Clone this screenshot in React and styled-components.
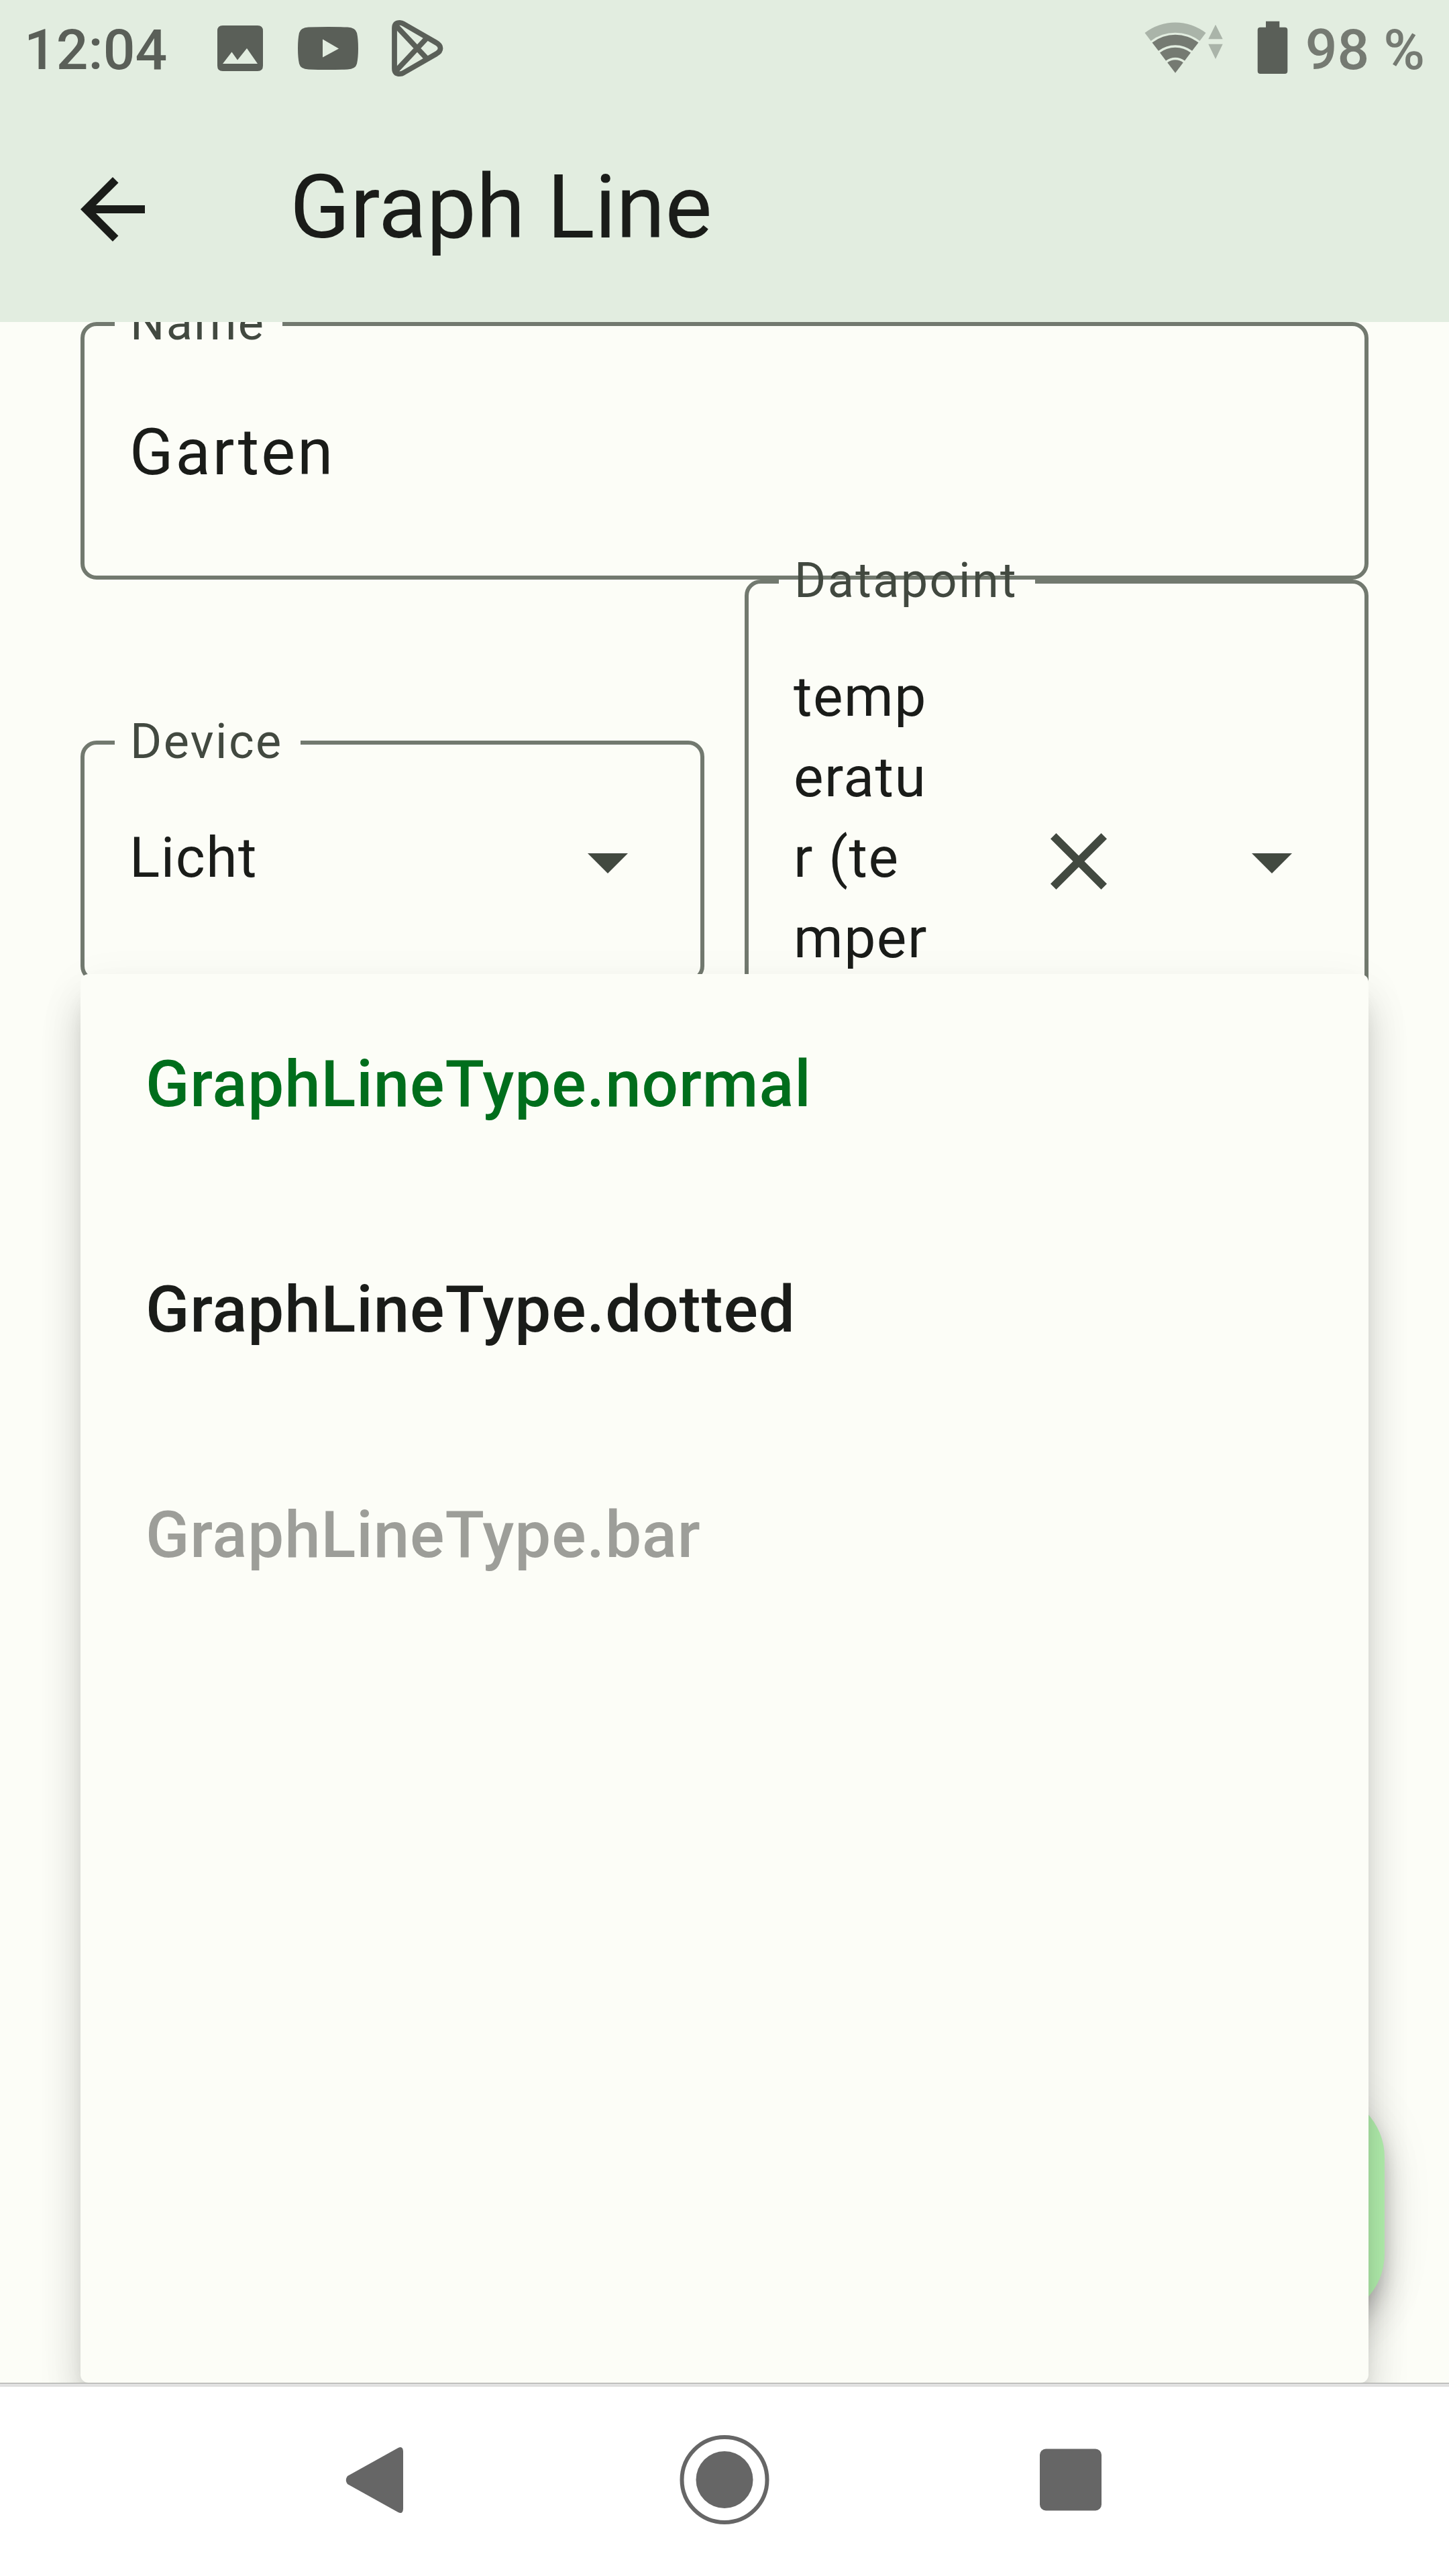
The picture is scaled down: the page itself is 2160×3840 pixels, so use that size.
import React from "react";
import styled, { createGlobalStyle } from "styled-components";

const c = {
  bar: "#e2ede0",
  surface: "#fcfdf7",
  text: "#1a1c19",
  variant: "#424940",
  outline: "#72796f",
  primary: "#006e1c",
  disabled: "#9d9e99",
  fab: "#b3f0ae",
  status: "#5a5f58",
  statusSoft: "#757a72",
  statusFaint: "#aab4a9",
  nav: "#666666",
};

const GlobalStyle = createGlobalStyle`
  html, body { margin: 0; padding: 0; background: ${c.surface}; }
  * { box-sizing: border-box; }
`;

const Screen = styled.div`
  width: 2160px;
  height: 3840px;
  display: flex;
  flex-direction: column;
  overflow: hidden;
  background: ${c.surface};
  font-family: Roboto, "Liberation Sans", sans-serif;
  color: ${c.text};
`;

const StatusBar = styled.header`
  flex: none;
  height: 144px;
  padding: 0 36px 0 36px;
  display: flex;
  justify-content: space-between;
  background: ${c.bar};
`;

const StatusGroup = styled.div`
  display: flex;
  align-items: flex-start;
`;

const StatusText = styled.span`
  font-size: 84px;
  font-weight: 500;
  line-height: 100px;
  padding-top: 25px;
  white-space: pre;
  color: ${(p) => (p.$soft ? c.statusSoft : c.status)};
`;

const StatusIcon = styled.svg`
  display: block;
  flex: none;
  height: 144px;
  width: ${(p) => p.$width}px;
  margin-left: ${(p) => p.$gap || 0}px;
  margin-right: ${(p) => p.$after || 0}px;
`;

const AppBar = styled.div`
  flex: none;
  height: 336px;
  padding-left: 96px;
  display: flex;
  align-items: center;
  gap: 192px;
  background: ${c.bar};
`;

const IconButton = styled.button`
  width: 144px;
  height: 144px;
  padding: 0;
  border: 0;
  background: none;
  flex: none;
  color: ${(p) => p.$color || c.variant};
  margin-left: ${(p) => p.$push || "0"};
  svg {
    display: block;
    width: 144px;
    height: 144px;
    fill: currentColor;
  }
`;

const Title = styled.h1`
  margin: 0;
  padding-bottom: 6px;
  font-size: 132px;
  font-weight: 400;
  line-height: 168px;
`;

const Body = styled.main`
  position: relative;
  flex: none;
  height: 3072px;
  padding: 0 120px;
  overflow: hidden;
`;

const FieldRow = styled.div`
  display: grid;
  grid-template-columns: 1fr 1fr;
  column-gap: 60px;
  align-items: center;
`;

const Field = styled.fieldset`
  display: flex;
  align-items: center;
  min-width: 0;
  margin: 0;
  height: ${(p) => p.$height}px;
  padding: 0 66px 0 45px;
  border: 6px solid ${c.outline};
  border-radius: 24px;
`;

const Label = styled.legend`
  height: 6px;
  padding: 0 26px 0 23px;
  font-size: 72px;
  line-height: 4px;
  letter-spacing: 2.4px;
  white-space: nowrap;
  color: ${c.variant};
`;

const InputValue = styled.div`
  padding: 4px 0 0 22px;
  font-size: 96px;
  line-height: 144px;
  letter-spacing: 3.1px;
`;

const SelectValue = styled.div`
  width: ${(p) => p.$width || "auto"};
  margin-left: 22px;
  padding-bottom: 10px;
  font-size: 84px;
  line-height: 120px;
  letter-spacing: 1.5px;
  white-space: pre-line;
`;

const Menu = styled.div`
  position: absolute;
  top: 972px;
  left: 120px;
  width: 1920px;
  height: 2100px;
  border-radius: 12px;
  background: ${c.surface};
  box-shadow: 0 30px 34px -18px rgba(0, 0, 0, 0.2), 0 48px 60px 4px rgba(0, 0, 0, 0.12),
    0 18px 72px 0 rgba(0, 0, 0, 0.06);
`;

const MenuItem = styled.div`
  height: 336px;
  padding: 0 96px 8px 97px;
  display: flex;
  align-items: center;
  font-size: 96px;
  font-weight: 500;
  letter-spacing: 0.95px;
  color: ${(p) => p.$color};
`;

const Fab = styled.button`
  position: absolute;
  right: 96px;
  bottom: 96px;
  width: 336px;
  height: 336px;
  border: 0;
  border-radius: 96px;
  background: ${c.fab};
  box-shadow: 0 18px 30px -6px rgba(0, 0, 0, 0.2), 0 36px 60px 0 rgba(0, 0, 0, 0.14),
    0 6px 80px 0 rgba(0, 0, 0, 0.08);
`;

const NavBar = styled.nav`
  flex: none;
  height: 288px;
  display: flex;
  justify-content: center;
  background: #ffffff;
  border-top: 1px solid #a0a19e;
  box-shadow: inset 0 5px 0 #e0e0e0;
`;

const NavButton = styled.div`
  width: 516px;
  display: flex;
  align-items: center;
  justify-content: center;
  svg {
    display: block;
    width: 144px;
    height: 144px;
    fill: ${c.nav};
  }
`;

const DropArrow = ({ push }) => (
  <IconButton as="span" $push={push}>
    <svg viewBox="0 0 24 24">
      <path d="M7 10l5 5 5-5z" />
    </svg>
  </IconButton>
);

const options = [
  { text: "GraphLineType.normal", color: c.primary },
  { text: "GraphLineType.dotted", color: c.text },
  { text: "GraphLineType.bar", color: c.disabled },
];

export default function App() {
  return (
    <Screen>
      <GlobalStyle />
      <StatusBar>
        <StatusGroup>
          <StatusText>12:04</StatusText>
          <StatusIcon $width={360} $gap={51} viewBox="300 0 360 144" overflow="visible">
            <path
              fill={c.status}
              fillRule="evenodd"
              d="M332 38h52q8 0 8 8v52q0 8-8 8h-52q-8 0-8-8V46q0-8 8-8zM332 95h52L368 72 354 89.500 345.500 77.500z"
            />
            <path
              fill={c.status}
              fillRule="evenodd"
              d="M460 40.500Q489 39.500 518 40.500Q530 41 532 49Q534 58 534 72T532 95Q530 103 518 103.500Q489 104.500 460 103.500Q448 103 446 95Q444 86 444 72T446 49Q448 41 460 40.500zM481 58.500v27L505 72.500z"
            />
            <g fill="none" stroke={c.status} strokeWidth="7.800">
              <path d="M588 42Q588 33.800 596 33.800Q599 33.800 602 35.800L650 63.500Q656.500 67 656.500 72T650 80.500L602 108.200Q599 110.200 596 110.200Q588 110.200 588 102z" />
              <path d="M590 38L636 87M590 106L636 57" />
            </g>
          </StatusIcon>
        </StatusGroup>
        <StatusGroup>
          <StatusIcon $width={215} $after={26} viewBox="1704 0 215 144">
            <path fill={c.statusFaint} d="M1705.500 49A75 75 0 0 1 1796.500 49L1787.400 61A60 60 0 0 0 1714.600 61z" />
            <g fill={c.statusSoft}>
              <path d="M1716.500 63.500A57 57 0 0 1 1785.500 63.500L1776.100 75.800A41.400 41.400 0 0 0 1725.900 75.800z" />
              <path d="M1728 78.500A38 38 0 0 1 1774 78.500L1765 90.400A23 23 0 0 0 1737 90.400z" />
              <path d="M1739.200 93.300A19.500 19.500 0 0 1 1762.800 93.300L1751 108.700z" />
            </g>
            <path fill={c.statusFaint} d="M1800.300 58.300h21.400L1811 36.700zM1800.300 65.700h21.400L1811 88z" />
            <path
              fill={c.status}
              d="M1886 31.700h20.300v9h8q4 0 4 4V106q0 4-4 4h-36.600q-4 0-4-4V44.700q0-4 4-4h8.300z"
            />
          </StatusIcon>
          <StatusText $soft>98 %</StatusText>
        </StatusGroup>
      </StatusBar>

      <AppBar>
        <IconButton $color={c.text} aria-label="Back">
          <svg viewBox="0 0 24 24">
            <path d="M20 11H7.830l5.590-5.590L12 4l-8 8 8 8 1.410-1.410L7.830 13H20v-2z" />
          </svg>
        </IconButton>
        <Title>Graph Line</Title>
      </AppBar>

      <Body>
        <Field $height={384}>
          <Label>Name</Label>
          <InputValue>Garten</InputValue>
        </Field>
        <FieldRow>
          <Field $height={360}>
            <Label>Device</Label>
            <SelectValue>Licht</SelectValue>
            <DropArrow push="auto" />
          </Field>
          <Field $height={840}>
            <Label>Datapoint</Label>
            <SelectValue $width="210px">{"temp\neratu\nr (te\nmper\natur)"}</SelectValue>
            <IconButton $push="auto" aria-label="Clear">
              <svg viewBox="0 0 24 24">
                <path d="M19 6.410L17.590 5 12 10.590 6.410 5 5 6.410 10.590 12 5 17.590 6.410 19 12 13.410 17.590 19 19 17.590 13.410 12z" />
              </svg>
            </IconButton>
            <DropArrow push="144px" />
          </Field>
        </FieldRow>
        <Fab aria-label="Save" />
        <Menu>
          {options.map((o) => (
            <MenuItem key={o.text} $color={o.color}>
              {o.text}
            </MenuItem>
          ))}
        </Menu>
      </Body>

      <NavBar>
        <NavButton>
          <svg viewBox="0 0 144 144">
            <path d="M26 66L101.500 24Q108.500 20.500 109 29V115Q108.500 123.500 101.500 120L26 78Q21.500 72 26 66z" />
          </svg>
        </NavButton>
        <NavButton>
          <svg viewBox="0 0 144 144">
            <circle cx="72" cy="71.500" r="42.500" />
            <circle cx="72" cy="71.500" r="63.500" fill="none" stroke={c.nav} strokeWidth="6" />
          </svg>
        </NavButton>
        <NavButton>
          <svg viewBox="0 0 144 144">
            <rect x="26" y="25.500" width="92" height="92" rx="9" />
          </svg>
        </NavButton>
      </NavBar>
    </Screen>
  );
}
